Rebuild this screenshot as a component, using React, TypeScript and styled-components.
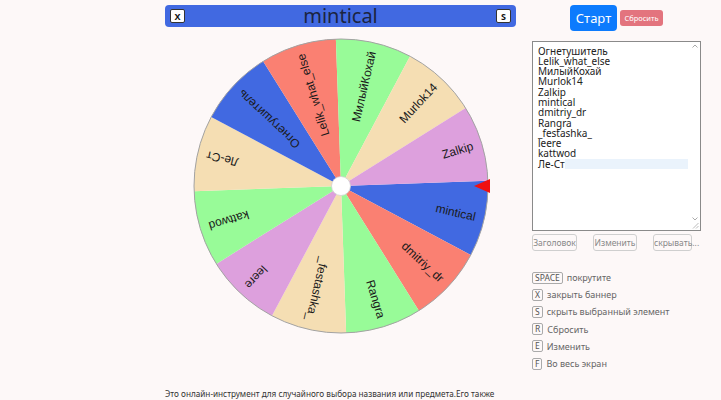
import React from "react";
import styled, { createGlobalStyle } from "styled-components";

const GlobalStyle = createGlobalStyle`
  html, body {
    margin: 0;
    padding: 0;
    background: #fdf8f8;
  }
  body {
    font-family: "Noto Sans", "Open Sans", sans-serif;
    color: #333;
  }
`;

const Page = styled.div`
  display: flex;
  align-items: flex-start;
  padding-left: 165px;
  height: 400px;
  overflow: hidden;
`;

const WheelColumn = styled.div`
  width: 351px;
  display: flex;
  flex-direction: column;
  align-items: center;
`;

const Banner = styled.div`
  margin-top: 5px;
  width: 100%;
  height: 22px;
  box-sizing: border-box;
  padding: 0 5px;
  background: #4169e1;
  border-radius: 4px;
  display: grid;
  grid-template-columns: auto 1fr auto;
  align-items: center;
`;

const BannerKey = styled.div`
  width: 15px;
  height: 14px;
  box-sizing: border-box;
  background: #fff;
  border: 1px solid #333;
  border-radius: 2px;
  display: flex;
  align-items: center;
  justify-content: center;
  font-size: 9px;
  font-weight: 700;
  color: #111;
`;

const BannerTitle = styled.div`
  text-align: center;
  font-size: 20px;
  line-height: 22px;
  color: #1b2440;
`;

const WheelSvg = styled.svg`
  display: block;
  margin-top: 9px;
  overflow: visible;
`;

const Footer = styled.div`
  margin-top: 52px;
  width: 100%;
  font-size: 8.2px;
  line-height: 12px;
  color: #333;
  white-space: nowrap;
`;

const SidePanel = styled.div`
  margin-left: 16px;
  width: 169px;
  display: flex;
  flex-direction: column;
`;

const Controls = styled.div`
  padding-top: 5px;
  display: flex;
  justify-content: center;
  align-items: center;
  gap: 3px;
`;

const StartButton = styled.button`
  width: 47px;
  height: 26px;
  padding: 0;
  border: none;
  border-radius: 4px;
  background: #0d7bfd;
  color: #fff;
  font-family: inherit;
  font-size: 13px;
`;

const ResetButton = styled.button`
  width: 43px;
  height: 16px;
  padding: 0;
  border: none;
  border-radius: 3px;
  background: #e3747e;
  color: #fff;
  font-family: inherit;
  font-size: 7.5px;
`;

const ListBox = styled.div`
  position: relative;
  margin-top: 10px;
  height: 190px;
  box-sizing: border-box;
  border: 1px solid #8a8a8a;
  background: #fff;
  padding: 3.5px 12px 0 5px;
  font-size: 10px;
  line-height: 10.3px;
  color: #222;
`;

const ListLine = styled.div`
  display: flex;
  white-space: nowrap;
`;

const LineFill = styled.span`
  flex: 1;
  background: #eaf3fc;
`;

const ScrollArrow = styled.svg<{ $bottom?: boolean }>`
  position: absolute;
  right: 2px;
  ${(p) => (p.$bottom ? "bottom: 9px;" : "top: 2px;")}
`;

const ResizeGrip = styled.svg`
  position: absolute;
  right: 1px;
  bottom: 1px;
`;

const ButtonRow = styled.div`
  margin-top: 3px;
  display: flex;
  gap: 16px;
`;

const GhostButton = styled.button<{ $w: number }>`
  width: ${(p) => p.$w}px;
  height: 17px;
  padding: 0;
  background: transparent;
  border: 1px solid #cfcfcf;
  border-radius: 3px;
  color: #888;
  font-family: inherit;
  font-size: 8.5px;
  white-space: nowrap;
`;

const Shortcuts = styled.div`
  margin-top: 18px;
  display: flex;
  flex-direction: column;
`;

const ShortcutRow = styled.div`
  height: 17.2px;
  display: flex;
  align-items: center;
  gap: 4px;
  font-size: 9px;
  color: #666;
`;

const Kbd = styled.span`
  min-width: 9px;
  height: 12px;
  box-sizing: border-box;
  padding: 0 2px;
  border: 1px solid #aaa;
  border-radius: 2px;
  font-size: 8.5px;
  line-height: 10px;
  color: #555;
  text-align: center;
`;

type Segment = { name: string; color: string };

const BLUE = "#4169e1";
const SALMON = "#fa8072";
const GREEN = "#98fb98";
const WHEAT = "#f5deb3";
const PLUM = "#dda0dd";

// clockwise from the segment under the pointer
const segments: Segment[] = [
  { name: "mintical", color: BLUE },
  { name: "dmitriy_dr", color: SALMON },
  { name: "Rangra", color: GREEN },
  { name: "_festashka_", color: WHEAT },
  { name: "leere", color: PLUM },
  { name: "kattwod", color: GREEN },
  { name: "Ле-Ст", color: WHEAT },
  { name: "Огнетушитель", color: BLUE },
  { name: "Lelik_what_else", color: SALMON },
  { name: "МилыйКохай", color: GREEN },
  { name: "Murlok14", color: WHEAT },
  { name: "Zalkip", color: PLUM },
];

const names = [
  "Огнетушитель",
  "Lelik_what_else",
  "МилыйКохай",
  "Murlok14",
  "Zalkip",
  "mintical",
  "dmitriy_dr",
  "Rangra",
  "_festashka_",
  "leere",
  "kattwod",
  "Ле-Ст",
];

const shortcuts = [
  { key: "SPACE", label: "покрутите" },
  { key: "X", label: "закрыть баннер" },
  { key: "S", label: "скрыть выбранный элемент" },
  { key: "R", label: "Сбросить" },
  { key: "E", label: "Изменить" },
  { key: "F", label: "Во весь экран" },
];

const CX = 150;
const CY = 150;
const R = 147;
const START = -2;

const point = (deg: number, r: number) => {
  const a = (deg * Math.PI) / 180;
  return `${CX + r * Math.cos(a)} ${CY + r * Math.sin(a)}`;
};

const Wheel: React.FC = () => {
  const step = 360 / segments.length;
  return (
    <WheelSvg width={300} height={300} viewBox="0 0 300 300">
      {segments.map((s, i) => {
        const a0 = START + i * step;
        const a1 = a0 + step;
        return (
          <path
            key={s.name}
            d={`M ${CX} ${CY} L ${point(a0, R)} A ${R} ${R} 0 0 1 ${point(a1, R)} Z`}
            fill={s.color}
          />
        );
      })}
      <circle cx={CX} cy={CY} r={R} fill="none" stroke="#a3a3a3" strokeWidth={1} />
      {segments.map((s, i) => {
        const mid = START + i * step + step / 2;
        return (
          <text
            key={s.name}
            x={CX + 138}
            y={CY}
            transform={`rotate(${mid} ${CX} ${CY})`}
            textAnchor="end"
            dominantBaseline="central"
            fontFamily='"Liberation Sans", Arial, sans-serif'
            fontSize={12}
            fill="#1a1a1a"
          >
            {s.name}
          </text>
        );
      })}
      <circle cx={CX} cy={CY} r={9.5} fill="#fff" stroke="#d0d0d0" strokeWidth={0.8} />
      <polygon points="283,150 299,143 299,157" fill="#f01010" />
    </WheelSvg>
  );
};

export default function App() {
  return (
    <>
      <GlobalStyle />
      <Page>
        <WheelColumn>
          <Banner>
            <BannerKey>X</BannerKey>
            <BannerTitle>mintical</BannerTitle>
            <BannerKey>S</BannerKey>
          </Banner>
          <Wheel />
          <Footer>
            Это онлайн-инструмент для случайного выбора названия или предмета.Его также
          </Footer>
        </WheelColumn>

        <SidePanel>
          <Controls>
            <StartButton>Старт</StartButton>
            <ResetButton>Сбросить</ResetButton>
          </Controls>

          <ListBox>
            {names.map((n, i) => (
              <ListLine key={n}>
                {n}
                {i === names.length - 1 && <LineFill />}
              </ListLine>
            ))}
            <ScrollArrow width={6} height={4} viewBox="0 0 6 4">
              <path d="M0.5 3.5 L3 1 L5.5 3.5" fill="none" stroke="#aaa" strokeWidth={1} />
            </ScrollArrow>
            <ScrollArrow $bottom width={6} height={4} viewBox="0 0 6 4">
              <path d="M0.5 0.5 L3 3 L5.5 0.5" fill="none" stroke="#aaa" strokeWidth={1} />
            </ScrollArrow>
            <ResizeGrip width={7} height={7} viewBox="0 0 7 7">
              <path d="M6.5 1 L1 6.5 M6.5 4 L4 6.5" stroke="#aaa" strokeWidth={0.8} />
            </ResizeGrip>
          </ListBox>

          <ButtonRow>
            <GhostButton $w={45}>Заголовок</GhostButton>
            <GhostButton $w={44}>Изменить</GhostButton>
            <GhostButton $w={39}>скрывать...</GhostButton>
          </ButtonRow>

          <Shortcuts>
            {shortcuts.map((s) => (
              <ShortcutRow key={s.key}>
                <Kbd>{s.key}</Kbd>
                {s.label}
              </ShortcutRow>
            ))}
          </Shortcuts>
        </SidePanel>
      </Page>
    </>
  );
}
